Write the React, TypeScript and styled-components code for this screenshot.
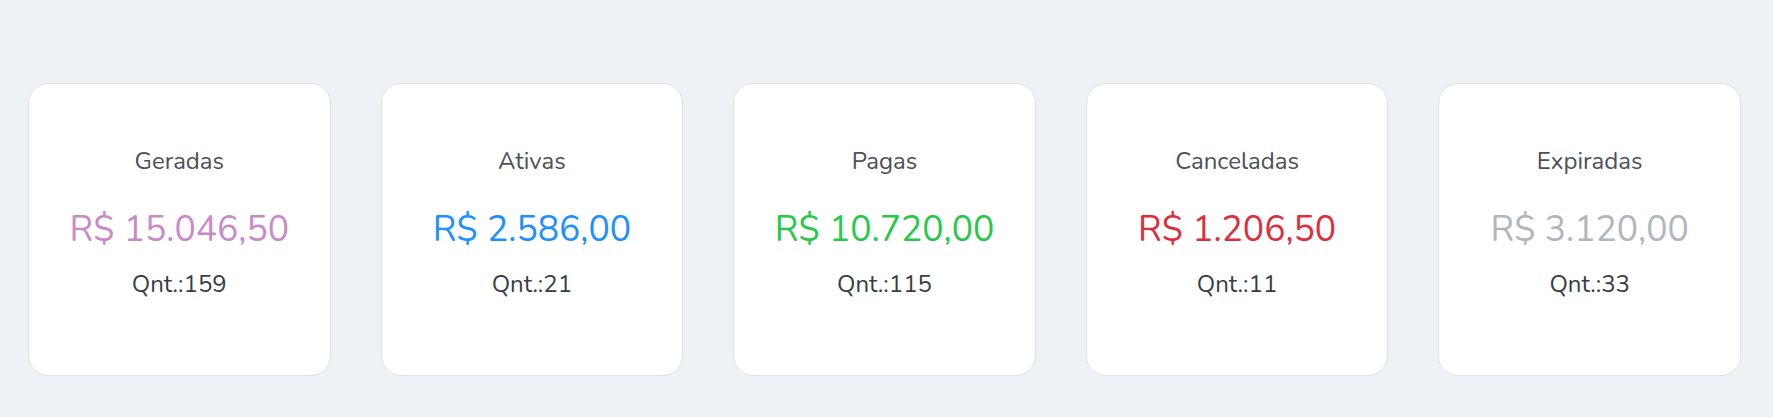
import styled, { createGlobalStyle } from "styled-components";

const GlobalStyle = createGlobalStyle`
  html, body {
    margin: 0;
    padding: 0;
    background: #eef1f6;
    font-family: "Nunito", Lato, "Noto Sans", sans-serif;
  }
`;

interface Summary {
  label: string;
  value: string;
  qnt: number;
  color: string;
}

const summaries: Summary[] = [
  { label: "Geradas", value: "R$ 15.046,50", qnt: 159, color: "#c98bc8" },
  { label: "Ativas", value: "R$ 2.586,00", qnt: 21, color: "#1e90ff" },
  { label: "Pagas", value: "R$ 10.720,00", qnt: 115, color: "#28c84b" },
  { label: "Canceladas", value: "R$ 1.206,50", qnt: 11, color: "#dc2f3e" },
  { label: "Expiradas", value: "R$ 3.120,00", qnt: 33, color: "#b1b6bc" },
];

export default function App() {
  return (
    <>
      <GlobalStyle />
      <Page>
        <CardRow>
          {summaries.map((s) => (
            <Card key={s.label}>
              <Label>{s.label}</Label>
              <Value $color={s.color}>{s.value}</Value>
              <Qnt>Qnt.:{s.qnt}</Qnt>
            </Card>
          ))}
        </CardRow>
      </Page>
    </>
  );
}

const Page = styled.div`
  min-height: 417px;
  box-sizing: border-box;
  padding: 83px 32px 0 28px;
`;

const CardRow = styled.div`
  display: flex;
  gap: 50px;
`;

const Card = styled.div`
  flex: 1;
  height: 293px;
  box-sizing: border-box;
  padding-top: 63px;
  background: #fff;
  border: 1px solid #dfe2e7;
  border-radius: 20px;
  display: flex;
  flex-direction: column;
  align-items: center;
`;

const Label = styled.div`
  font-size: 24px;
  line-height: 1.2;
  color: #4b5157;
`;

const Value = styled.div<{ $color: string }>`
  margin-top: 33px;
  font-size: 35.5px;
  line-height: 1.2;
  color: ${(p) => p.$color};
`;

const Qnt = styled.div`
  margin-top: 19px;
  font-size: 24px;
  line-height: 1.2;
  color: #373d43;
`;
